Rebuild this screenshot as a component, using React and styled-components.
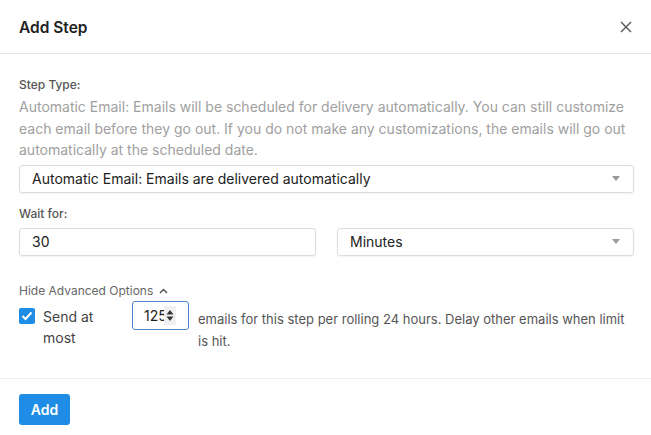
import React from "react";
import styled, { createGlobalStyle } from "styled-components";

const GlobalStyle = createGlobalStyle`
    html, body {
        margin: 0;
        padding: 0;
        background: #fff;
    }
    body {
        font-family: Inter, "Noto Sans", "Liberation Sans", sans-serif;
        color: #333;
    }
`;

const Modal = styled.div`
    width: 651px;
    height: 435px;
    background: #fff;
    display: flex;
    flex-direction: column;
`;

const Header = styled.div`
    height: 54px;
    flex-shrink: 0;
    border-bottom: 1px solid #e6e6e6;
    display: flex;
    align-items: center;
    justify-content: space-between;
    padding: 0 19px 0 19px;
    box-sizing: border-box;
    h2 {
        margin: 0;
        font-size: 15.5px;
        font-weight: 600;
        color: #222;
        padding-top: 1px;
    }
`;

const CloseButton = styled.button`
    border: none;
    background: none;
    padding: 0;
    width: 14px;
    height: 14px;
    display: flex;
    align-items: center;
    justify-content: center;
    cursor: pointer;
    margin-right: -1px;
`;

const Body = styled.div`
    padding: 22px 17px 0 19px;
    height: 325px;
    flex-shrink: 0;
    box-sizing: border-box;
    border-bottom: 1px solid #ececec;
`;

const Label = styled.div`
    font-size: 12px;
    font-weight: 500;
    line-height: 18px;
    color: #555;
    margin-bottom: ${(p) => p.$mb || 2}px;
`;

const Description = styled.p`
    margin: 0 0 4px;
    font-size: 14px;
    line-height: 21.5px;
    color: #a0a0a0;
`;

const Field = styled.div`
    position: relative;
    height: 28px;
    box-sizing: border-box;
    border: 1px solid #dcdcdc;
    border-radius: 3px;
    box-shadow: 0 1px 2px rgba(0, 0, 0, 0.06);
    display: flex;
    align-items: center;
    padding: 0 12px;
    font-size: 14px;
    color: #222;
    flex: 1;
`;

const Caret = styled.span`
    margin-left: auto;
    width: 0;
    height: 0;
    border-left: 4.5px solid transparent;
    border-right: 4.5px solid transparent;
    border-top: 5px solid #999;
    margin-right: 1px;
`;

const Row = styled.div`
    display: flex;
    gap: 21px;
`;

const Toggle = styled.div`
    margin-top: 26px;
    display: flex;
    align-items: center;
    gap: 6px;
    font-size: 12px;
    line-height: 18px;
    color: #666;
`;

const LimitRow = styled.div`
    display: flex;
    align-items: flex-start;
    margin-top: 1px;
`;

const Check = styled.span`
    width: 16px;
    height: 16px;
    border-radius: 2px;
    background: #1f8ce6;
    display: flex;
    align-items: center;
    justify-content: center;
    margin-top: 7px;
    flex-shrink: 0;
`;

const CheckLabel = styled.div`
    width: 66px;
    flex-shrink: 0;
    margin: 0 23px 0 8px;
    padding-top: 5px;
    font-size: 14px;
    line-height: 21px;
    color: #444;
`;

const NumberBox = styled.div`
    width: 57px;
    height: 29px;
    box-sizing: border-box;
    border: 1px solid #4f86c6;
    border-radius: 3px;
    display: flex;
    align-items: center;
    padding-left: 11px;
    font-size: 14px;
    color: #222;
    flex-shrink: 0;
`;

const NumberText = styled.span`
    width: 20px;
    overflow: hidden;
    white-space: nowrap;
`;

const Spinner = styled.span`
    width: 12px;
    height: 19px;
    background: #f0f0f0;
    display: flex;
    align-items: center;
    justify-content: center;
`;

const LimitText = styled.div`
    margin-left: 9px;
    padding-top: 7px;
    font-size: 13px;
    line-height: 22px;
    color: #555;
`;

const Footer = styled.div`
    padding: 15px 19px;
`;

const AddButton = styled.button`
    height: 31px;
    width: 51px;
    border: none;
    border-radius: 3px;
    background: #1f8ce6;
    color: #fff;
    font-family: inherit;
    font-size: 14px;
    font-weight: 600;
    cursor: pointer;
`;

const App = () => {
    return (
        <Modal>
            <GlobalStyle />
            <Header>
                <h2>Add Step</h2>
                <CloseButton aria-label="Close">
                    <svg width="12" height="12" viewBox="0 0 12 12">
                        <path d="M1 1L11 11M11 1L1 11" stroke="#555" strokeWidth="1.4" />
                    </svg>
                </CloseButton>
            </Header>
            <Body>
                <Label>Step Type:</Label>
                <Description>
                    Automatic Email: Emails will be scheduled for delivery automatically. You can still customize
                    each email before they go out. If you do not make any customizations, the emails will go out
                    automatically at the scheduled date.
                </Description>
                <Field>
                    Automatic Email: Emails are delivered automatically
                    <Caret />
                </Field>
                <Label style={{ marginTop: 12 }} $mb={5}>Wait for:</Label>
                <Row>
                    <Field>30</Field>
                    <Field>
                        Minutes
                        <Caret />
                    </Field>
                </Row>
                <Toggle>
                    Hide Advanced Options
                    <svg width="9" height="6" viewBox="0 0 9 6">
                        <path d="M1 5L4.5 1.5L8 5" stroke="#555" strokeWidth="1.5" fill="none" />
                    </svg>
                </Toggle>
                <LimitRow>
                    <Check>
                        <svg width="12" height="10" viewBox="0 0 12 10">
                            <path d="M1.5 5L4.5 8L10.5 1.5" stroke="#fff" strokeWidth="2" fill="none" />
                        </svg>
                    </Check>
                    <CheckLabel>Send at most</CheckLabel>
                    <NumberBox>
                        <NumberText>125</NumberText>
                        <Spinner>
                            <svg width="8" height="13" viewBox="0 0 8 13">
                                <path d="M0.5 5.5L4 1L7.5 5.5Z" fill="#333" />
                                <path d="M0.5 7.5L4 12L7.5 7.5Z" fill="#333" />
                            </svg>
                        </Spinner>
                    </NumberBox>
                    <LimitText>
                        emails for this step per rolling 24 hours. Delay other emails when limit is hit.
                    </LimitText>
                </LimitRow>
            </Body>
            <Footer>
                <AddButton>Add</AddButton>
            </Footer>
        </Modal>
    );
};

export default App;
